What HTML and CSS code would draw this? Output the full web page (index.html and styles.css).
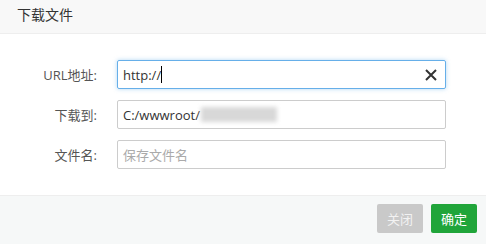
FILE: index.html
```html
<!DOCTYPE html>
<html lang="zh-CN">
<head>
    <meta charset="UTF-8">
    <title>下载文件</title>
    <link rel="stylesheet" href="styles.css">
</head>
<body>
    <div class="dialog">
        <div class="dialog-title">下载文件</div>
        <div class="dialog-body">
            <div class="row">
                <label class="row-label">URL地址:</label>
                <div class="field field-focus">
                    <span class="field-text">http://</span><span class="caret"></span>
                    <svg class="clear-icon" width="12" height="12" viewBox="0 0 12 12">
                        <path d="M1 1 L11 11 M11 1 L1 11" stroke="#333" stroke-width="2" fill="none"/>
                    </svg>
                </div>
            </div>
            <div class="row">
                <label class="row-label">下载到:</label>
                <div class="field">
                    <span class="field-text">C:/wwwroot/</span><span class="blurred"></span>
                </div>
            </div>
            <div class="row">
                <label class="row-label">文件名:</label>
                <div class="field">
                    <span class="placeholder">保存文件名</span>
                </div>
            </div>
        </div>
        <div class="dialog-footer">
            <button class="btn btn-gray">关闭</button>
            <button class="btn btn-green">确定</button>
        </div>
    </div>
</body>
</html>
```

FILE: styles.css
```css
body {
    margin: 0;
    padding: 0;
    background: #fff;
    font-family: "Open Sans", "Noto Sans CJK SC", sans-serif;
    color: #333;
}

.dialog {
    width: 486px;
    height: 244px;
    display: flex;
    flex-direction: column;
}

.dialog-title {
    height: 33px;
    line-height: 30px;
    padding-left: 17px;
    font-size: 14px;
    color: #333;
    background: #f8f8f8;
    border-bottom: 1px solid #eee;
}

.dialog-body {
    height: 161px;
    padding-top: 26px;
    box-sizing: border-box;
    display: flex;
    flex-direction: column;
    gap: 11px;
}

.row {
    display: flex;
    align-items: center;
}

.row-label {
    width: 97px;
    padding-right: 20px;
    text-align: right;
    font-size: 13px;
    color: #555;
}

.field {
    width: 329px;
    height: 29px;
    box-sizing: border-box;
    border: 1px solid #ccc;
    border-radius: 2px;
    padding: 0 5px;
    display: flex;
    align-items: center;
    font-size: 13px;
    color: #333;
    position: relative;
}

.field-focus {
    border-color: #66afe9;
    box-shadow: 0 0 4px rgba(102, 175, 233, 0.5);
}

.caret {
    display: inline-block;
    width: 1px;
    height: 17px;
    background: #000;
}

.clear-icon {
    position: absolute;
    right: 8px;
    top: 8px;
}

.blurred {
    display: inline-block;
    width: 76px;
    height: 15px;
    margin-left: 1px;
    background: #d8d8d8;
    filter: blur(2px);
}

.placeholder {
    color: #aaa;
}

.dialog-footer {
    flex: 1;
    background: #f6f8f8;
    border-top: 1px solid #eee;
    display: flex;
    justify-content: flex-end;
    align-items: flex-start;
    gap: 8px;
    padding: 8px 9px 0 0;
}

.btn {
    width: 46px;
    height: 29px;
    border: none;
    border-radius: 2px;
    color: #fff;
    font-family: inherit;
    font-size: 13px;
    padding: 0;
}

.btn-gray {
    background: #c9c9c9;
    color: #f2f2f2;
}

.btn-green {
    background: #20a53a;
}
```
